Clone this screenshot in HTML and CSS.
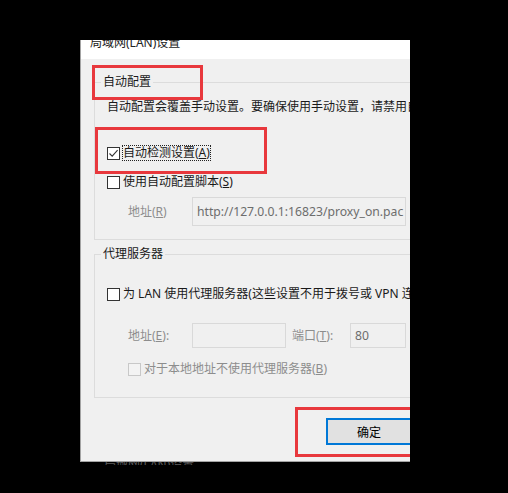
FILE: index.html
```html
<!DOCTYPE html>
<html lang="zh-CN">
<head>
<meta charset="utf-8">
<title>局域网(LAN)设置</title>
<link rel="stylesheet" href="styles.css">
</head>
<body>
<div class="screen">
  <div class="dialog">
    <div class="titlebar"><span class="title">局域网(LAN)设置</span></div>
    <div class="content">
      <fieldset class="group g1">
        <legend>自动配置</legend>
        <div class="gbody">
          <p class="desc">自动配置会覆盖手动设置。要确保使用手动设置，请禁用自动检测。</p>
          <div class="row r-detect">
            <span class="cb"><svg width="11" height="11" viewBox="0 0 11 11"><path d="M1.5 5.5 L4.2 8.2 L9.6 2.2" fill="none" stroke="#333" stroke-width="1.1"/></svg></span>
            <span class="label focus">自动检测设置(<u>A</u>)</span>
          </div>
          <div class="row r-script">
            <span class="cb"></span>
            <span class="label">使用自动配置脚本(<u>S</u>)</span>
          </div>
          <div class="row r-addr">
            <span class="dlabel">地址(<u>R</u>)</span>
            <span class="field url">http://127.0.0.1:16823/proxy_on.pac</span>
          </div>
        </div>
      </fieldset>
      <fieldset class="group g2">
        <legend>代理服务器</legend>
        <div class="gbody">
          <div class="row r-lan">
            <span class="cb"></span>
            <span class="label">为 LAN 使用代理服务器(这些设置不用于拨号或 VPN 连接)(<u>X</u>)</span>
          </div>
          <div class="row r-proxy">
            <span class="dlabel">地址(<u>E</u>):</span>
            <span class="field addr"></span>
            <span class="dlabel port-l">端口(<u>T</u>):</span>
            <span class="field port">80</span>
          </div>
          <div class="row r-local">
            <span class="cb disabled"></span>
            <span class="label dis">对于本地地址不使用代理服务器(<u>B</u>)</span>
          </div>
        </div>
      </fieldset>
      <div class="buttons">
        <button class="btn ok">确定</button>
        <button class="btn">取消</button>
      </div>
    </div>
    <div class="mark m1"></div>
    <div class="mark m2"></div>
    <div class="mark m3"></div>
  </div>
  <div class="remnant"><span class="remnant-text">局域网(LAN)设置</span></div>
</div>
</body>
</html>
```
FILE: styles.css
```css
* { box-sizing: border-box; }
html, body { margin: 0; padding: 0; background: #000; }
body {
  font-family: "Noto Sans", "Noto Sans CJK SC", sans-serif;
  font-size: 12px;
  color: #1a1a1a;
}
.screen {
  width: 508px;
  height: 493px;
  overflow: hidden;
  background: #000;
  padding: 40px 0 0 80px;
}
.dialog {
  position: relative;
  width: 330px;
  height: 422px;
  overflow: hidden;
  background: #f0f0f0;
  border-left: 1px solid #a3a3a3;
  border-bottom: 1px solid #a3a3a3;
}
.titlebar {
  height: 19px;
  background: #fff;
  padding-left: 9px;
  overflow: hidden;
}
.title {
  display: block;
  line-height: 16px;
  margin-top: -5px;
  color: #222;
  white-space: nowrap;
}
.content {
  width: 440px;
  padding-left: 13px;
}
.group {
  margin: 0;
  padding: 0;
  min-width: 0;
  width: 410px;
  border: 1px solid #dcdcdc;
}
.group legend {
  margin-left: 6px;
  padding: 0 2px;
  line-height: 16px;
  color: #1a1a1a;
}
.g1 { margin-top: 15px; }
.g1 .gbody { padding: 0 0 13px 12px; }
.g2 { margin-top: 6px; }
.g2 .gbody { padding: 0 0 20px 12px; }
.desc {
  margin: 9px 0 0;
  line-height: 16px;
  white-space: nowrap;
}
.row {
  display: flex;
  align-items: center;
  white-space: nowrap;
}
.cb {
  flex: none;
  width: 13px;
  height: 13px;
  border: 1px solid #333;
  background: #fff;
  display: flex;
  align-items: center;
  justify-content: center;
}
.cb svg { display: block; }
.cb.disabled {
  border-color: #c8c8c8;
  background: #f3f3f3;
}
.label {
  margin-left: 3px;
  line-height: 16px;
}
.label.focus {
  margin-left: 2px;
  border: 1px dotted #222;
  line-height: 14px;
}
.label.dis { color: #8d8d8d; }
.r-detect { margin-top: 30px; height: 16px; }
.r-script { margin-top: 13px; height: 16px; }
.r-addr { margin-top: 7px; padding-left: 21px; }
.dlabel {
  flex: none;
  width: 64px;
  color: #8d8d8d;
  line-height: 16px;
}
.field {
  flex: none;
  height: 29px;
  border: 1px solid #d9d9d9;
  background: #f0f0f0;
  color: #6d6d6d;
  padding-left: 4px;
  display: flex;
  align-items: center;
  font-size: 12.2px;
}
.url { width: 214px; }
.r-lan { margin-top: 24px; height: 16px; }
.r-proxy { margin-top: 21px; padding-left: 21px; }
.r-proxy .field { height: 25px; }
.addr { width: 94px; }
.port-l { width: 58px; margin-left: 6px; }
.port { width: 56px; padding-left: 4px; }
.r-local { margin-top: 13px; padding-left: 21px; height: 16px; }
.buttons {
  margin-top: 20px;
  padding-left: 232px;
  display: flex;
  gap: 8px;
}
.btn {
  flex: none;
  width: 86px;
  height: 27px;
  padding: 0;
  border: 1px solid #adadad;
  background: #e1e1e1;
  font: inherit;
  color: #000;
}
.btn.ok { border: 2px solid #0078d7; }
.mark {
  position: absolute;
  border: 3px solid #e8383d;
}
.m1 { left: 11px; top: 25px; width: 111px; height: 35px; }
.m2 { left: 14px; top: 87px; width: 172px; height: 47px; }
.m3 { left: 214px; top: 367px; width: 130px; height: 50px; }
.remnant {
  height: 3px;
  overflow: hidden;
  margin-left: 24px;
  color: #5a5a5a;
}
.remnant-text {
  display: block;
  line-height: 16px;
  margin-top: -5px;
  white-space: nowrap;
}
```
